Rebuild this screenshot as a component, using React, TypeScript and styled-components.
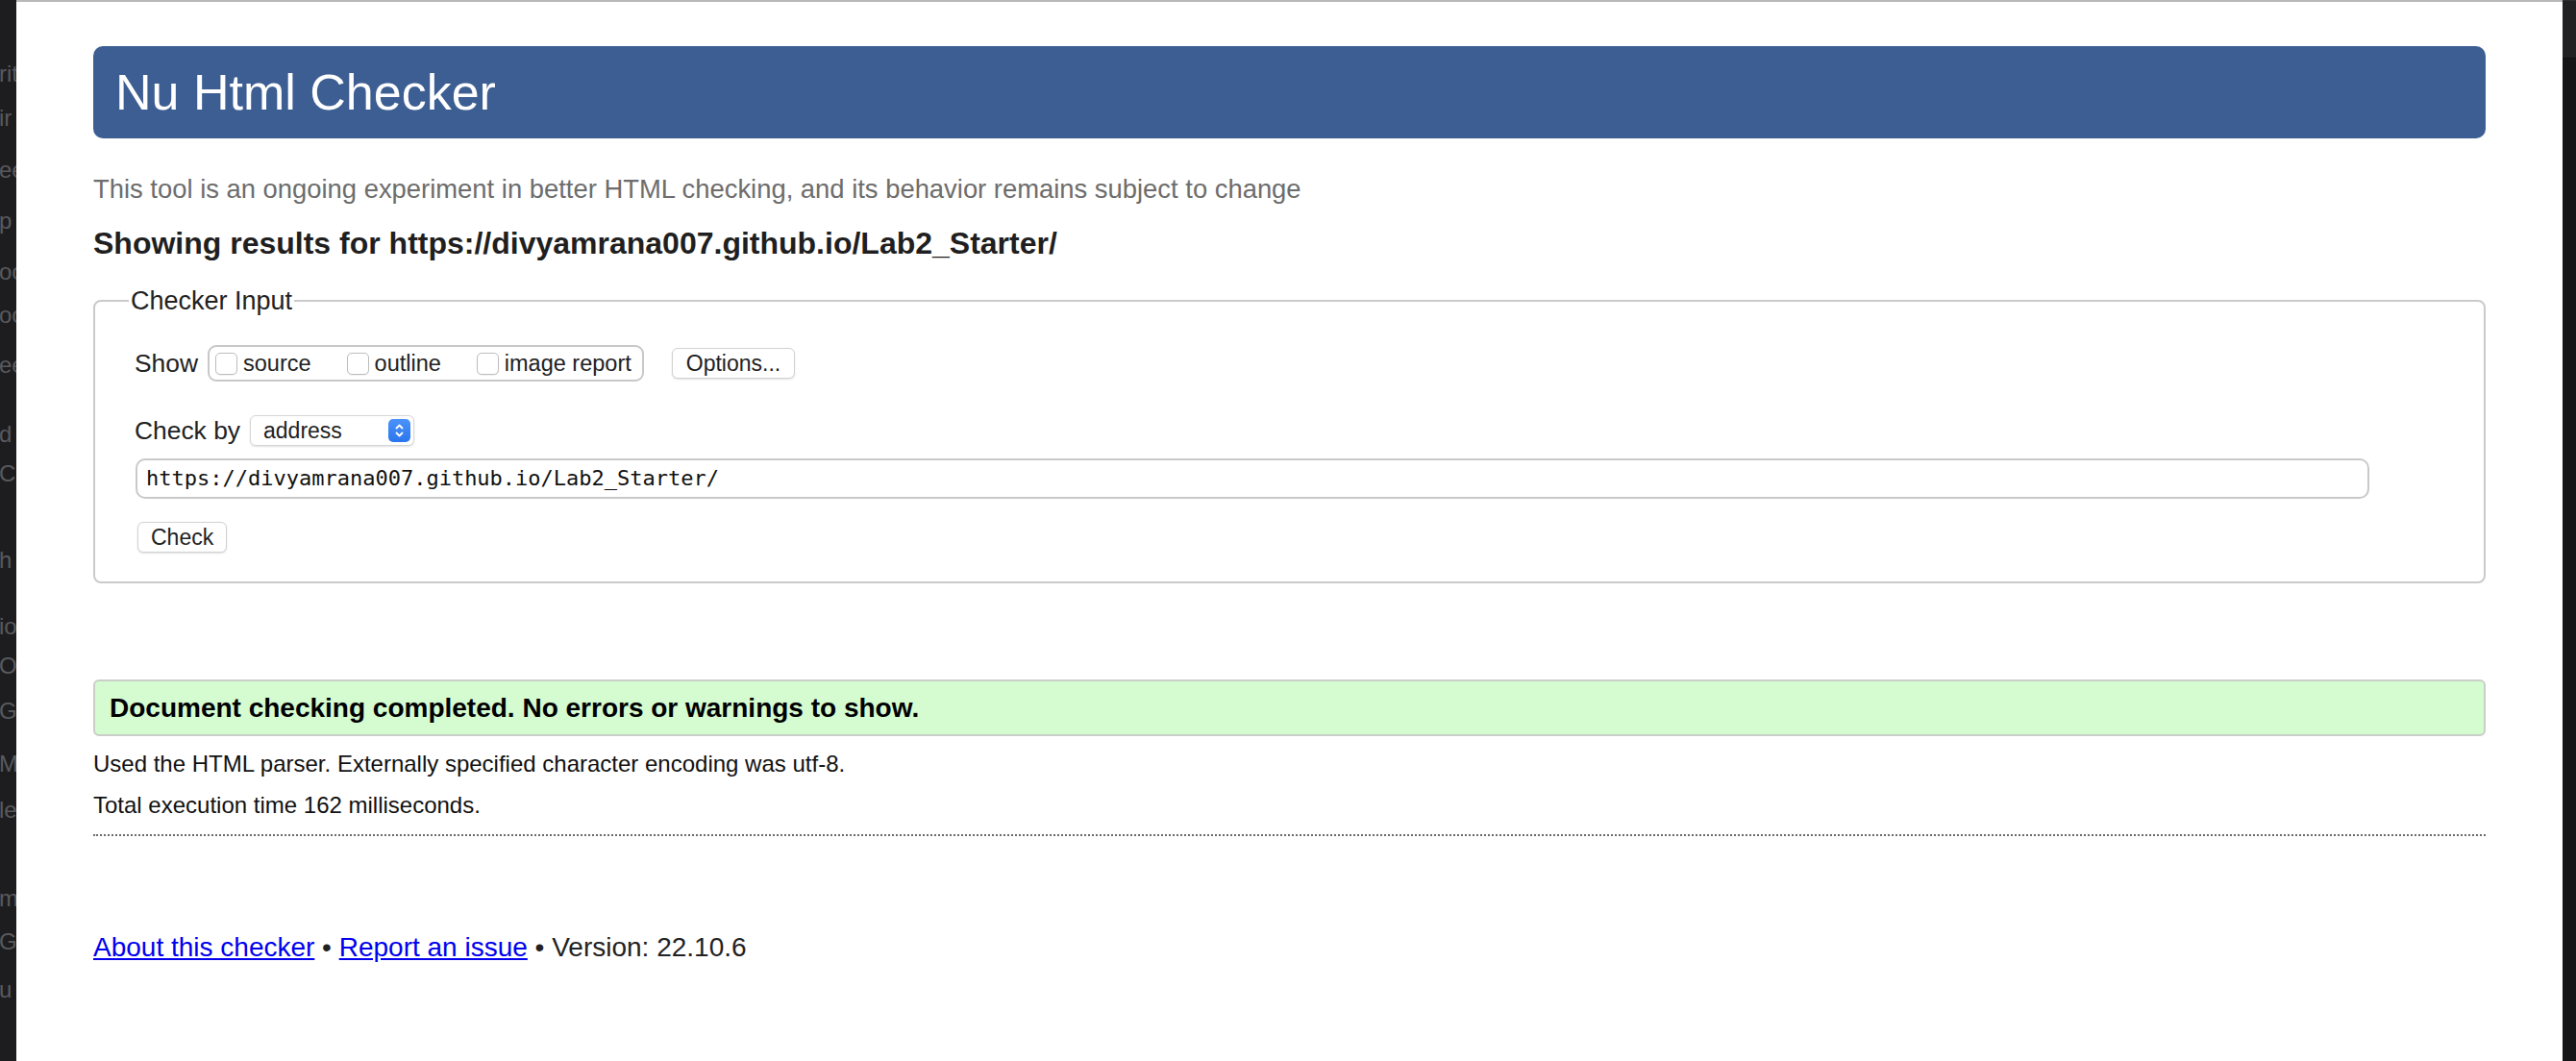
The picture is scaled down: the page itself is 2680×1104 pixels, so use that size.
import styled, { createGlobalStyle } from 'styled-components';

const GlobalStyle = createGlobalStyle`
    html, body {
        margin: 0;
        padding: 0;
        background: #1c1c1e;
    }

    body {
        font-family: "Liberation Sans", Arial, Helvetica, sans-serif;
    }
`;

const dockItems = [
    { text: 'rit', h: 46 },
    { text: 'ir', h: 54 },
    { text: 'ee', h: 53 },
    { text: 'p', h: 53 },
    { text: 'oo', h: 45 },
    { text: 'oo', h: 52 },
    { text: 'ee', h: 72 },
    { text: 'd', h: 41 },
    { text: 'Cl', h: 90 },
    { text: 'h', h: 69 },
    { text: 'io', h: 41 },
    { text: 'On', h: 47 },
    { text: 'Go', h: 55 },
    { text: 'Ma', h: 48 },
    { text: 'le', h: 92 },
    { text: 'mp', h: 45 },
    { text: 'Gr', h: 50 },
    { text: 'u', h: 40 },
];

const showOptions = ['source', 'outline', 'image report'];

export default function App() {
    return (
        <>
            <GlobalStyle />
            <Screen>
                <LeftDock>
                    {dockItems.map((item, i) => (
                        <DockItem key={i} $h={item.h}>
                            {item.text}
                        </DockItem>
                    ))}
                </LeftDock>

                <Page>
                    <Title>Nu Html Checker</Title>
                    <Intro>
                        This tool is an ongoing experiment in better HTML checking, and its
                        behavior remains subject to change
                    </Intro>
                    <ResultsFor>Showing results for https://divyamrana007.github.io/Lab2_Starter/</ResultsFor>

                    <InputFieldset>
                        <Legend>Checker Input</Legend>

                        <Row>
                            <RowLabel>Show</RowLabel>
                            <CheckGroup>
                                {showOptions.map((opt) => (
                                    <CheckItem key={opt}>
                                        <CheckBox />
                                        {opt}
                                    </CheckItem>
                                ))}
                            </CheckGroup>
                            <MacButton $ml={29}>Options...</MacButton>
                        </Row>

                        <Row $mt={35}>
                            <RowLabel>Check by</RowLabel>
                            <Select>
                                address
                                <Stepper>
                                    <svg width="23" height="24" viewBox="0 0 23 24">
                                        <path
                                            d="M8.5 9.5 L11.5 6.5 L14.5 9.5"
                                            fill="none"
                                            stroke="#fff"
                                            strokeWidth="1.8"
                                            strokeLinecap="round"
                                            strokeLinejoin="round"
                                        />
                                        <path
                                            d="M8.5 14.5 L11.5 17.5 L14.5 14.5"
                                            fill="none"
                                            stroke="#fff"
                                            strokeWidth="1.8"
                                            strokeLinecap="round"
                                            strokeLinejoin="round"
                                        />
                                    </svg>
                                </Stepper>
                            </Select>
                        </Row>

                        <UrlInput>https://divyamrana007.github.io/Lab2_Starter/</UrlInput>

                        <Row $mt={24}>
                            <MacButton $ml={3} $px={13}>Check</MacButton>
                        </Row>
                    </InputFieldset>

                    <SuccessBox>Document checking completed. No errors or warnings to show.</SuccessBox>
                    <Detail>Used the HTML parser. Externally specified character encoding was utf-8.</Detail>
                    <Detail>Total execution time 162 milliseconds.</Detail>
                    <Dotted />

                    <Footer>
                        <FooterLink href="#">About this checker</FooterLink> •{' '}
                        <FooterLink href="#">Report an issue</FooterLink> • Version: 22.10.6
                    </Footer>
                </Page>

                <RightDock>
                    <RightDockTop />
                </RightDock>
            </Screen>
        </>
    );
}

const Screen = styled.div`
    display: flex;
    width: 2680px;
    height: 1104px;
    overflow: hidden;
    background: #1c1c1e;
`;

const LeftDock = styled.div`
    flex: none;
    width: 17px;
    overflow: hidden;
    background: #1d1d1f;
    padding-top: 64px;
    box-sizing: border-box;
    display: flex;
    flex-direction: column;
`;

const DockItem = styled.div<{ $h: number }>`
    flex: none;
    height: ${(p) => p.$h}px;
    line-height: 26px;
    font-size: 24px;
    color: #59595d;
    white-space: nowrap;
    margin-left: -1px;
`;

const RightDock = styled.div`
    flex: none;
    width: 14px;
    background: #151517;
`;

const RightDockTop = styled.div`
    height: 60px;
    background: #212123;
    border-bottom: 1px solid #0e0e10;
    box-shadow: inset 0 34px 0 -33px #2e2e30;
`;

const Page = styled.main`
    flex: 1;
    min-width: 0;
    background: #fff;
    border-top: 2px solid #b9b9b9;
    padding: 46px 80px 0;
    box-sizing: border-box;
    color: #222;
`;

const Title = styled.h1`
    margin: 0;
    height: 96px;
    padding: 0 23px;
    box-sizing: border-box;
    background: #3d5e92;
    border-radius: 10px;
    color: #fff;
    font-size: 52px;
    font-weight: normal;
    line-height: 96px;
`;

const Intro = styled.p`
    margin: 37px 0 0;
    font-size: 27.4px;
    line-height: 32px;
    color: #6d6d6d;
`;

const ResultsFor = styled.h2`
    margin: 22px 0 0;
    font-size: 32px;
    line-height: 36px;
    font-weight: bold;
    color: #1f1f21;
`;

const InputFieldset = styled.fieldset`
    margin: 26px 0 0;
    padding: 30px 41px 30px;
    border: 2px solid #cacaca;
    border-radius: 8px;
    min-width: 0;
`;

const Legend = styled.legend`
    margin-left: -6px;
    padding: 0 2px;
    font-size: 27px;
    line-height: 32px;
    color: #222;
`;

const Row = styled.div<{ $mt?: number }>`
    display: flex;
    align-items: center;
    margin-top: ${(p) => p.$mt ?? 0}px;
`;

const RowLabel = styled.span`
    font-size: 26.4px;
    line-height: 32px;
    margin-right: 10px;
    color: #222;
`;

const CheckGroup = styled.div`
    display: flex;
    align-items: center;
    gap: 37px;
    height: 38px;
    box-sizing: border-box;
    padding: 0 11px 0 6px;
    border: 2px solid #c8c8c8;
    border-radius: 9px;
`;

const CheckItem = styled.label`
    display: flex;
    align-items: center;
    gap: 6px;
    font-size: 23.5px;
    color: #222;
`;

const CheckBox = styled.span`
    width: 23px;
    height: 23px;
    box-sizing: border-box;
    border: 1px solid #bdbdbd;
    border-radius: 5px;
    background: #fff;
    box-shadow: 0 1px 1px rgba(0, 0, 0, 0.06);
`;

const MacButton = styled.button<{ $ml?: number; $px?: number }>`
    margin-left: ${(p) => p.$ml ?? 0}px;
    height: 32px;
    padding: 0 ${(p) => p.$px ?? 14}px;
    font-family: "Liberation Sans", Arial, sans-serif;
    font-size: 23px;
    color: #222;
    background: #fff;
    border: 1px solid #d2d2d2;
    border-radius: 6px;
    box-shadow: 0 1px 2px rgba(0, 0, 0, 0.12);
`;

const Select = styled.div`
    display: flex;
    align-items: center;
    justify-content: space-between;
    width: 171px;
    height: 32px;
    box-sizing: border-box;
    padding: 0 3px 0 13px;
    font-size: 23px;
    color: #222;
    background: #fff;
    border: 1px solid #d6d6d6;
    border-radius: 6px;
    box-shadow: 0 1px 2px rgba(0, 0, 0, 0.12);
`;

const Stepper = styled.span`
    display: flex;
    width: 23px;
    height: 24px;
    border-radius: 5px;
    background: linear-gradient(#4b92fa, #2c76ee);
`;

const UrlInput = styled.div`
    margin: 13px 0 0 1px;
    width: 2324px;
    height: 42px;
    box-sizing: border-box;
    padding: 0 9px;
    border: 2px solid #c9c9c9;
    border-radius: 10px;
    font-family: "DejaVu Sans Mono", "Liberation Mono", monospace;
    font-size: 22px;
    line-height: 38px;
    color: #111;
`;

const SuccessBox = styled.div`
    margin-top: 100px;
    height: 59px;
    box-sizing: border-box;
    padding: 0 15px;
    background: #d5fbd0;
    border: 2px solid #c9cfc7;
    border-radius: 6px;
    font-size: 28px;
    font-weight: bold;
    line-height: 55px;
    color: #000;
`;

const Detail = styled.p`
    margin: 15px 0 0;
    font-size: 24px;
    line-height: 28px;
    color: #111;
`;

const Dotted = styled.hr`
    margin: 16px 0 0;
    border: none;
    border-top: 2px dotted #6a6a6a;
`;

const Footer = styled.footer`
    margin-top: 100px;
    font-size: 28px;
    line-height: 32px;
    color: #222;
`;

const FooterLink = styled.a`
    color: #0000ee;
    text-decoration: underline;
`;
